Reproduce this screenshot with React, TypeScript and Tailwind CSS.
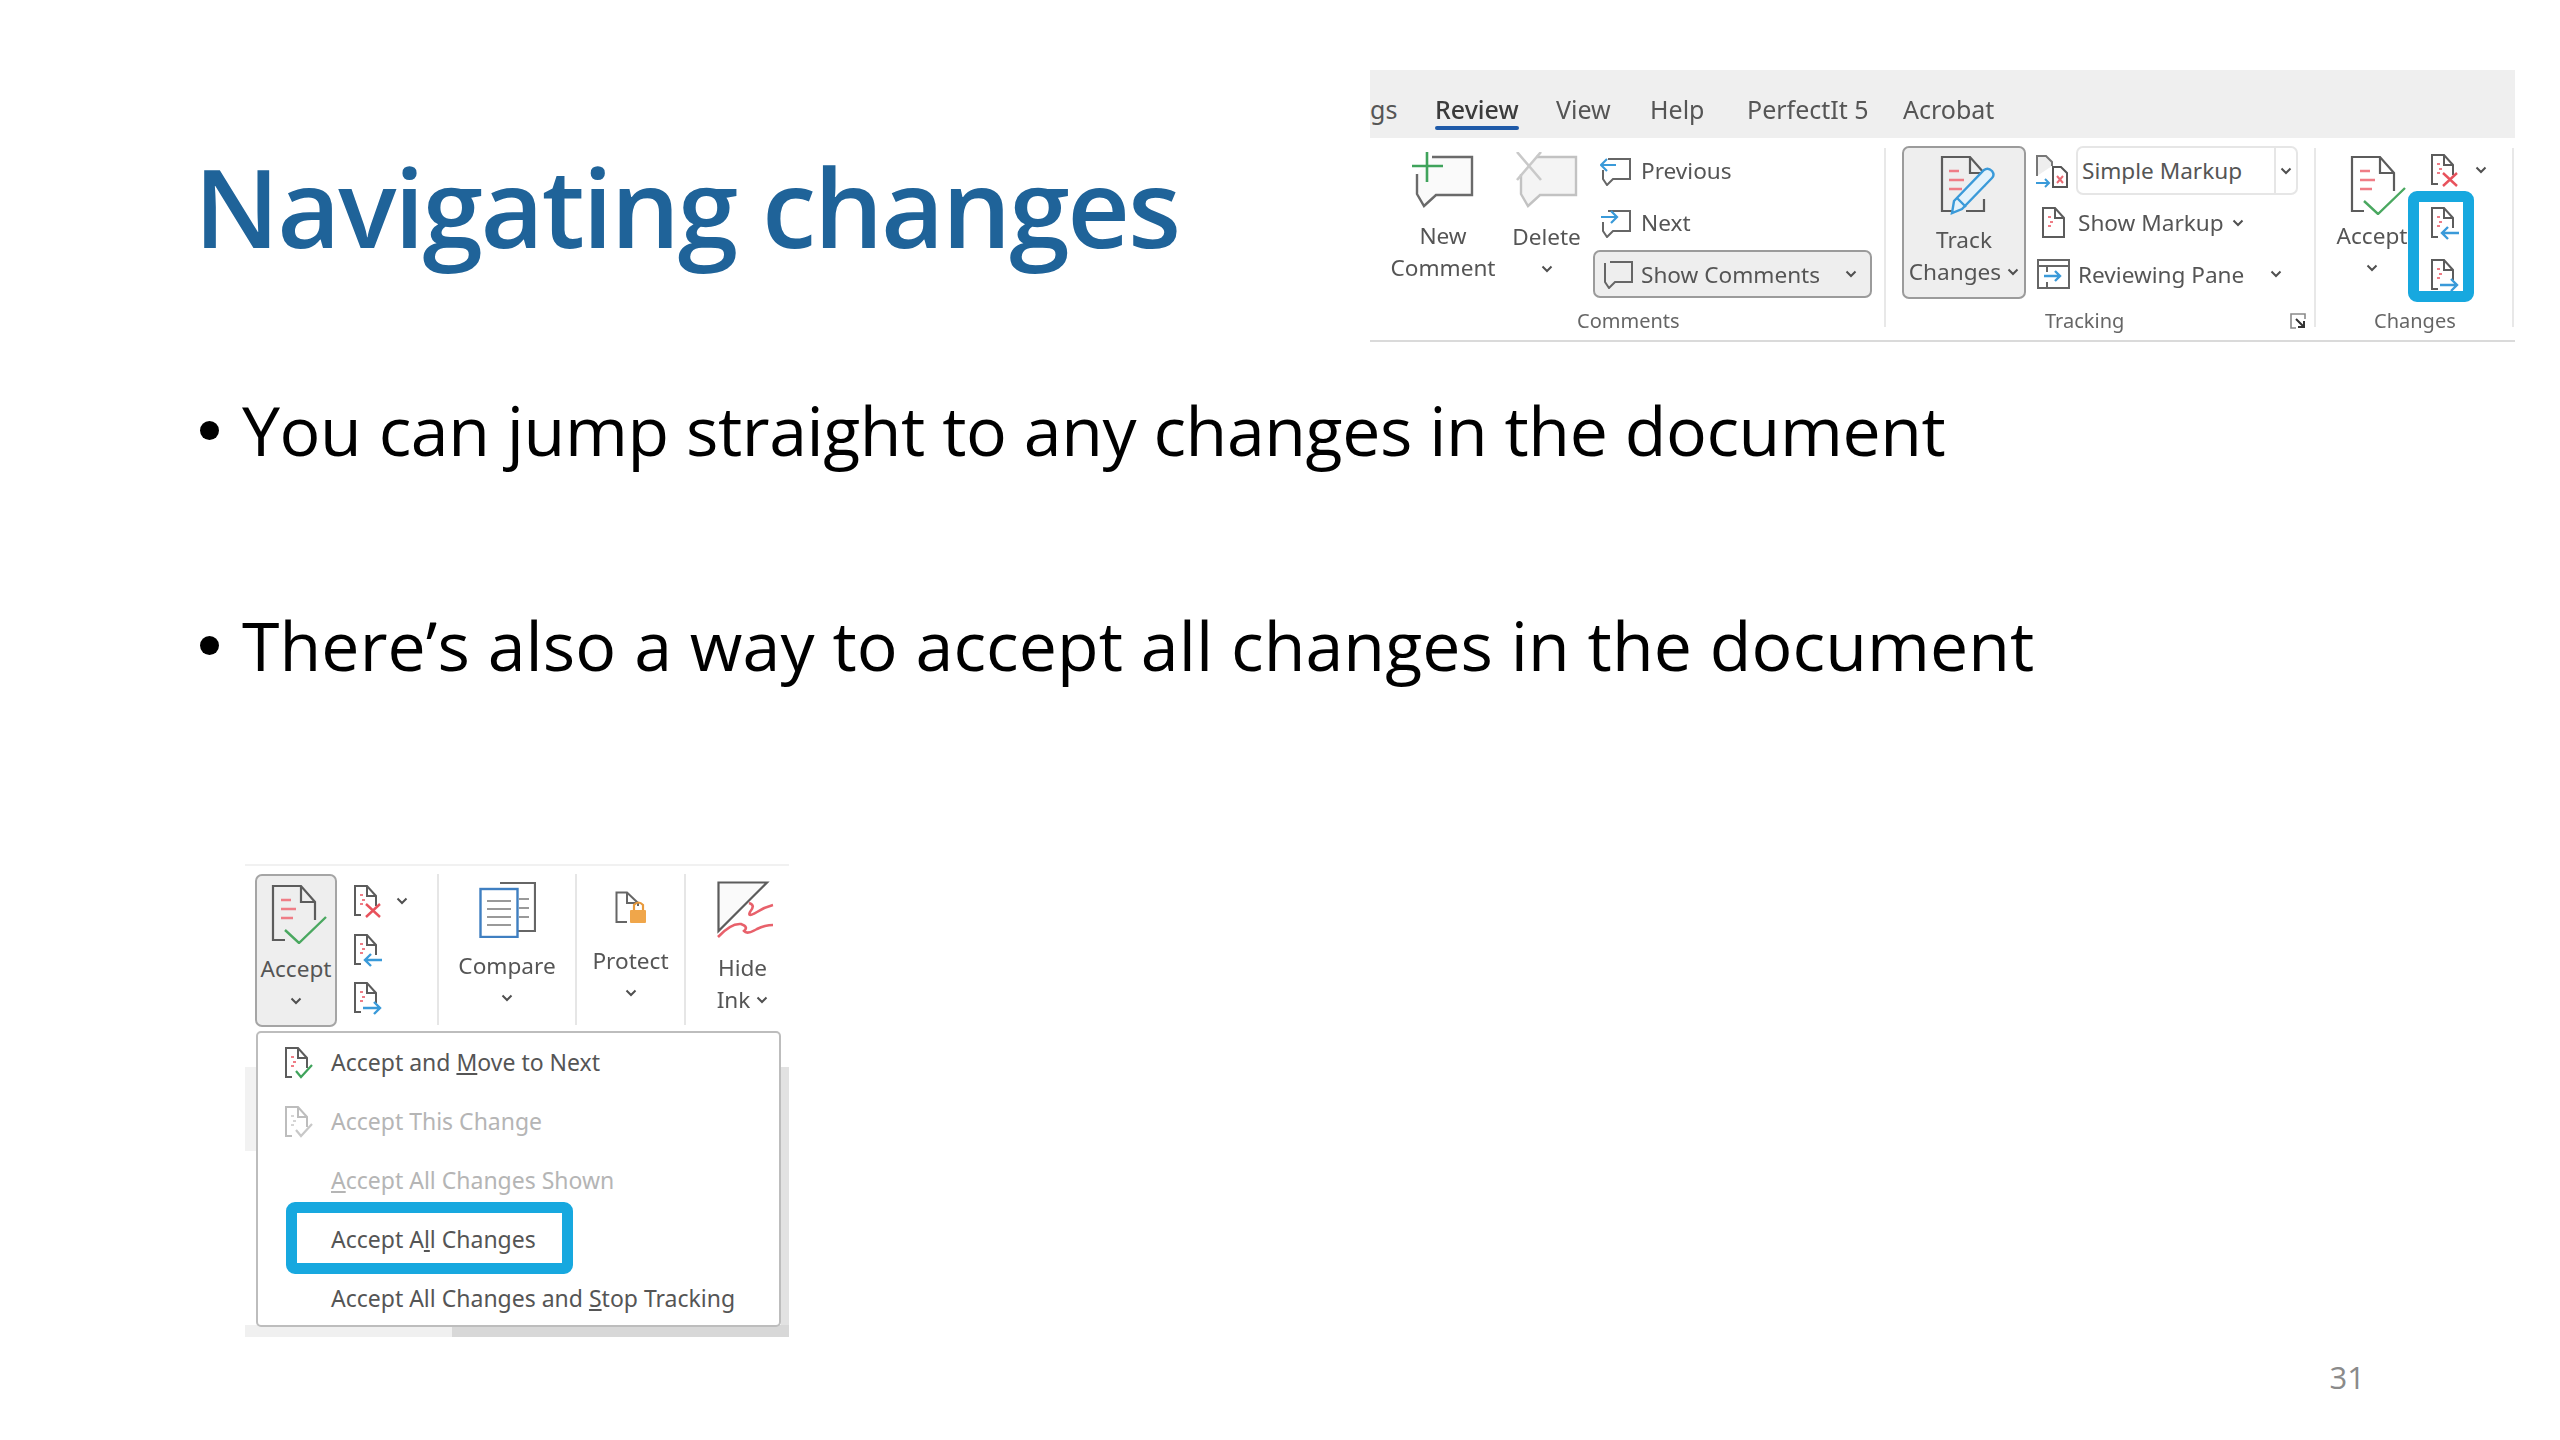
const ink = "#555555"

function Chevron({ className = "" }: { className?: string }) {
  return (
    <svg width="12" height="8" viewBox="0 0 12 8" className={className}>
      <polyline points="1.5,1.5 6,6 10.5,1.5" fill="none" stroke="#505050" strokeWidth="2" />
    </svg>
  )
}

function Bubble({ light = false, x = 0 }: { light?: boolean; x?: number }) {
  const c = light ? "#c2c2c2" : "#6a6a6a"
  return <path d={`M${x + 5} 22 V42 L${x + 12} 54 L${x + 24} 43 H${x + 60} V5 H${x + 20}`} fill={light ? "#f4f4f4" : "#fafafa"} stroke={c} strokeWidth="2.4" />
}

function NewCommentIcon() {
  return (
    <svg width="62" height="56" viewBox="0 0 62 56">
      <Bubble />
      <path d="M0 14 H31 M15 0 V30" stroke="#3fa35b" strokeWidth="2.6" />
    </svg>
  )
}

function DeleteCommentIcon() {
  return (
    <svg width="62" height="56" viewBox="0 0 62 56">
      <Bubble light />
      <path d="M1 0 L25 28 M25 0 L1 28" stroke="#c9c9c9" strokeWidth="2.6" />
    </svg>
  )
}

function SmallBubble({ arrow }: { arrow?: "left" | "right" }) {
  return (
    <svg width="31" height="30" viewBox="0 0 31 30">
      <path d="M3 14 V23 L7 29 L13 23 H30 V3 H8" fill="none" stroke="#666" strokeWidth="2" />
      {!arrow && <path d="M3 4 V23" stroke="#666" strokeWidth="2" />}
      {arrow === "left" && <path d="M16 9 H2 M7 3 L1 9 L7 15" fill="none" stroke="#3a9ad9" strokeWidth="2.2" />}
      {arrow === "right" && <path d="M1 9 H16 M11 3 L17 9 L11 15" fill="none" stroke="#3a9ad9" strokeWidth="2.2" />}
    </svg>
  )
}

function SmallDoc({ mark, light = false }: { mark?: "x" | "left" | "right" | "check"; light?: boolean }) {
  const line = light ? "#bdbdbd" : "#5c5c5c"
  return (
    <svg width="30" height="34" viewBox="0 0 30 34">
      <path d={mark ? "M8 31 H2 V2 H14 L23 12 V22 M14 2 V12 H23" : "M23 22 V31 H2 V2 H14 L23 12 V22 M14 2 V12 H23"} fill="none" stroke={line} strokeWidth="2" />
      <path d="M7 11 H10 M9 16 H12 M7 20 H10" stroke={light ? "#d5d5d5" : "#ef7d86"} strokeWidth="2" />
      {mark === "x" && <path d="M13 20 L27 33 M27 20 L13 33" stroke="#e8525c" strokeWidth="2.4" />}
      {mark === "left" && <path d="M29 27 H12 M18 21 L12 27 L18 33" fill="none" stroke="#3a9ad9" strokeWidth="2.4" />}
      {mark === "right" && <path d="M10 27 H27 M21 21 L27 27 L21 33" fill="none" stroke="#3a9ad9" strokeWidth="2.4" />}
      {mark === "check" && <path d="M12 25 L17 31 L28 19" fill="none" stroke={light ? "#c8c8c8" : "#3fa35b"} strokeWidth="2.2" />}
    </svg>
  )
}

function TrackIcon() {
  return (
    <svg width="56" height="60" viewBox="0 0 56 60">
      <path d="M12 56 H2 V2 H30 L44 18 V32 M30 2 V18 H44 M44 44 V56 H26" fill="none" stroke="#5c5c5c" strokeWidth="2.2" />
      <path d="M9 16 H19 M9 25 H24 M9 34 H22" stroke="#ef7d86" strokeWidth="2.6" />
      <path d="M12 58 L14 46 L44 15 Q48 12 52 16 Q55 20 52 23 L22 54 Z M17 43 L26 52" fill="#e4f2fb" stroke="#3a9ad9" strokeWidth="2.4" />
    </svg>
  )
}

function AcceptIcon() {
  return (
    <svg width="56" height="60" viewBox="0 0 56 60">
      <path d="M14 56 H2 V2 H30 L44 18 V36 M30 2 V18 H44" fill="none" stroke="#5c5c5c" strokeWidth="2.2" />
      <path d="M10 16 H20 M10 25 H25 M10 34 H22" stroke="#ef7d86" strokeWidth="2.6" />
      <path d="M14 46 L28 59 L55 33" fill="none" stroke="#4aa860" strokeWidth="2.4" />
    </svg>
  )
}

function SimpleMarkupIcon() {
  return (
    <svg width="33" height="34" viewBox="0 0 33 34">
      <path d="M2 22 V2 H11 L17 8 V12" fill="#eee" stroke="#777" strokeWidth="2" />
      <path d="M18 33 V13 H26 L32 19 V33 Z" fill="#fff" stroke="#555" strokeWidth="2" />
      <path d="M22 22 L28 29 M28 22 L22 29" stroke="#ea6a73" strokeWidth="2" />
      <path d="M1 29 H14 M10 25 L14 29 L10 33" fill="none" stroke="#3a9ad9" strokeWidth="2" />
    </svg>
  )
}

function PaneIcon() {
  return (
    <svg width="33" height="30" viewBox="0 0 33 30">
      <rect x="1" y="1" width="31" height="28" fill="#fff" stroke="#666" strokeWidth="2" />
      <path d="M1 7 H32 M10 7 V13 M10 23 V29" stroke="#666" strokeWidth="2" />
      <path d="M7 17 H23 M18 12 L23 17 L18 22" fill="none" stroke="#3a9ad9" strokeWidth="2.4" />
    </svg>
  )
}

function LauncherIcon() {
  return (
    <svg width="16" height="16" viewBox="0 0 16 16" className="ml-auto mr-[8px]">
      <path d="M6 15 H1 V1 H15 V6" fill="none" stroke="#8a8a8a" strokeWidth="1.6" />
      <path d="M6 6 L14 14 M14 8 V14 H8" fill="none" stroke="#333" strokeWidth="2" />
    </svg>
  )
}

function CompareIcon() {
  return (
    <svg width="57" height="57" viewBox="0 0 57 57">
      <path d="M21 2 H56 V50 H38" fill="#fff" stroke="#666" strokeWidth="2.2" />
      <path d="M40 18 H50 M40 27 H50 M40 36 H50" stroke="#999" strokeWidth="2.2" />
      <rect x="1.5" y="8" width="37" height="48" fill="#fff" stroke="#3f7fc1" strokeWidth="2.4" />
      <path d="M8 20 H32 M8 28 H32 M8 36 H32 M8 44 H32" stroke="#999" strokeWidth="2.2" />
    </svg>
  )
}

function ProtectIcon() {
  return (
    <svg width="31" height="33" viewBox="0 0 31 33">
      <path d="M12 31 H1.5 V1.5 H12 L23 12 V15 M12 1.5 V12 H23" fill="none" stroke="#666" strokeWidth="2" />
      <path d="M19 19 V14 Q23.5 9 28 14 V19" fill="none" stroke="#e89a3c" strokeWidth="2.2" />
      <rect x="15" y="19" width="16" height="13" rx="1" fill="#f0a64a" />
    </svg>
  )
}

function HideInkIcon() {
  return (
    <svg width="57" height="57" viewBox="0 0 57 57">
      <path d="M1.5 50 V1.5 H50 Z" fill="#fafafa" stroke="#5c5c5c" strokeWidth="2.2" />
      <path d="M32 22 Q39 24 33 31 Q30 37 40 31 Q48 26 56 24" fill="none" stroke="#e8616b" strokeWidth="2.6" />
      <path d="M1 56 Q14 42 24 43 Q32 46 27 50 Q30 54 40 48 Q48 44 56 44" fill="none" stroke="#e8616b" strokeWidth="2.6" />
    </svg>
  )
}

function Lines({ lines }: { lines: React.ReactNode[] }) {
  return (
    <>
      {lines.map((l, i) => (
        <div key={i} className="h-[32px] flex items-center justify-center gap-[6px] whitespace-nowrap">{l}</div>
      ))}
    </>
  )
}

function SmallRow({ icon, text, className = "" }: { icon: React.ReactNode; text: string; className?: string }) {
  return (
    <div className={`h-[49px] flex items-center ${className}`}>
      {icon}
      <span className="whitespace-nowrap">{text}</span>
    </div>
  )
}

function GroupLabel({ children, className = "" }: { children: React.ReactNode; className?: string }) {
  return <div className={`text-[20px] leading-[28px] text-[#666] whitespace-nowrap ${className}`}>{children}</div>
}

function Separator() {
  return <div className="w-[2px] h-[179px] mt-[10px] bg-[#e8e8e8]"></div>
}

function Ribbon() {
  return (
    <div className="w-[1145px] h-[272px] flex flex-col text-[22.6px] blur-[0.5px]" style={{ color: ink }}>
      <div className="h-[68px] bg-[#efefef] flex items-center text-[25px] leading-[34px] pt-[10px]">
        <span className="w-[65px] overflow-hidden">gs</span>
        <span className="relative w-[121px] text-[#3b3b3b] font-medium">
          Review
          <span className="absolute left-0 bottom-[-4px] w-[84px] h-[4px] rounded-sm bg-[#1f5aa8]"></span>
        </span>
        <span className="w-[94px]">View</span>
        <span className="w-[97px]">Help</span>
        <span className="w-[156px]">PerfectIt 5</span>
        <span>Acrobat</span>
      </div>
      <div className="h-[204px] flex border-b-2 border-[#dadada]">
        {/* comments */}
        <div className="w-[514px] pt-[8px] flex flex-col">
          <div className="h-[153px] flex">
            <div className="w-[106px] ml-[20px] flex flex-col items-center">
              <div className="mt-[6px] mb-[12px]"><NewCommentIcon /></div>
              <Lines lines={["New", "Comment"]} />
            </div>
            <div className="w-[67px] ml-[17px] flex flex-col items-center">
              <div className="mt-[6px] mb-[13px]"><DeleteCommentIcon /></div>
              <Lines lines={["Delete", <Chevron />]} />
            </div>
            <div className="w-[279px] ml-[13px] flex flex-col gap-[3px]">
              <SmallRow className="pl-[7px]" icon={<div className="w-[41px]"><SmallBubble arrow="left" /></div>} text="Previous" />
              <SmallRow className="pl-[7px]" icon={<div className="w-[41px]"><SmallBubble arrow="right" /></div>} text="Next" />
              <div className="h-[48px] flex items-center pl-[7px] pr-[13px] bg-[#eeeeee] border-2 border-[#9b9b9b] rounded-[7px]">
                <div className="w-[39px]"><SmallBubble /></div>
                <span className="whitespace-nowrap pt-[2px]">Show Comments</span>
                <Chevron className="ml-auto" />
              </div>
            </div>
          </div>
          <GroupLabel className="mt-[8px] ml-[207px]">Comments</GroupLabel>
        </div>
        <Separator />
        {/* tracking */}
        <div className="w-[428px] pt-[8px] flex flex-col">
          <div className="h-[153px] flex">
            <div className="w-[124px] ml-[16px] bg-[#eeeeee] border-2 border-[#9b9b9b] rounded-[7px] flex flex-col items-center">
              <div className="mt-[7px] mb-[9px] ml-[8px]"><TrackIcon /></div>
              <Lines lines={["Track", <>Changes <Chevron /></>]} />
            </div>
            <div className="w-[263px] ml-[9px] flex flex-col gap-[3px]">
              <div className="h-[49px] flex items-center">
                <div className="w-[41px]"><SimpleMarkupIcon /></div>
                <div className="w-[222px] h-[49px] flex items-center bg-white border-2 border-[#e6e6e6] rounded-[7px] pl-[4px]">
                  <span className="flex-1 whitespace-nowrap">Simple Markup</span>
                  <div className="w-[22px] h-full border-l-2 border-[#e6e6e6] flex items-center justify-center"><Chevron /></div>
                </div>
              </div>
              <div className="h-[49px] flex items-center pl-[6px]">
                <div className="w-[37px]"><SmallDoc /></div>
                <span className="whitespace-nowrap">Show Markup</span>
                <Chevron className="ml-[8px]" />
              </div>
              <div className="h-[48px] flex items-center pl-[2px]">
                <div className="w-[41px]"><PaneIcon /></div>
                <span className="whitespace-nowrap pt-[2px]">Reviewing Pane</span>
                <Chevron className="ml-[26px]" />
              </div>
            </div>
          </div>
          <div className="mt-[8px] flex items-center">
            <GroupLabel className="ml-[159px]">Tracking</GroupLabel>
            <LauncherIcon />
          </div>
        </div>
        <Separator />
        {/* changes */}
        <div className="w-[196px] pt-[8px] flex flex-col">
          <div className="h-[153px] flex">
            <div className="w-[70px] ml-[21px] flex flex-col items-center">
              <div className="mt-[9px] mb-[5px] ml-[12px]"><AcceptIcon /></div>
              <Lines lines={["Accept", <Chevron />]} />
            </div>
            <div className="relative ml-[23px] flex flex-col">
              <div className="h-[52px] pt-[7px] flex items-start">
                <SmallDoc mark="x" />
                <Chevron className="ml-[15px] mt-[13px]" />
              </div>
              <div className="h-[52px] pt-[8px]"><SmallDoc mark="left" /></div>
              <div className="h-[49px] pt-[8px]"><SmallDoc mark="right" /></div>
              <div className="absolute left-[-22px] top-[45px] w-[66px] h-[111px] border-[11px] border-[#17a8df] rounded-[9px]"></div>
            </div>
          </div>
          <GroupLabel className="mt-[8px] ml-[58px]">Changes</GroupLabel>
        </div>
        <Separator />
      </div>
    </div>
  )
}

function MenuItem({ icon, children, muted = false }: { icon?: React.ReactNode; children: React.ReactNode; muted?: boolean }) {
  return (
    <div className={`h-[59px] flex items-center whitespace-nowrap ${muted ? "text-[#b5b5b5]" : ""}`}>
      <div className="w-[47px]">{icon}</div>
      {children}
    </div>
  )
}

function AcceptMenuShot() {
  return (
    <div className="relative w-[544px] h-[473px] text-[22.6px] blur-[0.5px]" style={{ color: ink }}>
      <div className="h-[162px] border-t-2 border-[#f1f1f1] pt-[8px] flex">
        <div className="w-[82px] h-[153px] ml-[10px] bg-[#eeeeee] border-2 border-[#a5a5a5] rounded-[7px] flex flex-col items-center">
          <div className="mt-[8px] mb-[9px] ml-[6px]"><AcceptIcon /></div>
          <Lines lines={["Accept", <Chevron />]} />
        </div>
        <div className="w-[100px] pl-[16px] pt-[10px] flex flex-col">
          <div className="h-[53px] flex items-start">
            <SmallDoc mark="x" />
            <Chevron className="ml-[13px] mt-[13px]" />
          </div>
          <div className="h-[52px]"><SmallDoc mark="left" /></div>
          <div className="h-[48px]"><SmallDoc mark="right" /></div>
        </div>
        <div className="w-[140px] h-[151px] border-x-2 border-[#e6e6e6] flex flex-col items-center">
          <div className="mt-[7px] mb-[12px]"><CompareIcon /></div>
          <Lines lines={["Compare", <Chevron />]} />
        </div>
        <div className="w-[109px] h-[151px] border-r-2 border-[#e6e6e6] flex flex-col items-center">
          <div className="mt-[17px] mb-[21px]"><ProtectIcon /></div>
          <Lines lines={["Protect", <Chevron />]} />
        </div>
        <div className="flex-1 flex flex-col items-center pl-[10px]">
          <div className="mt-[7px] mb-[14px] ml-[6px]"><HideInkIcon /></div>
          <Lines lines={["Hide", <>Ink <Chevron /></>]} />
        </div>
      </div>
      {/* the page behind the open menu */}
      <div className="absolute left-0 top-[203px] w-[542px] h-[84px] bg-[#f2f2f2]"></div>
      <div className="absolute right-0 top-[203px] w-[8px] h-[270px] bg-[#e2e2e2]"></div>
      <div className="absolute left-[207px] right-0 bottom-0 h-[12px] bg-[#d8d8d8]"></div>
      <div className="absolute left-0 bottom-0 w-[207px] h-[12px] bg-[#f0f0f0]"></div>
      <div className="absolute left-[11px] top-[167px] w-[525px] h-[296px] bg-white border-2 border-[#bdbdbd] rounded-[5px] pl-[26px] text-[23px]">
        <MenuItem icon={<SmallDoc mark="check" />}>Accept and&nbsp;<u>M</u>ove to Next</MenuItem>
        <MenuItem muted icon={<SmallDoc mark="check" light />}>Accept This Change</MenuItem>
        <MenuItem muted><u>A</u>ccept All Changes Shown</MenuItem>
        <MenuItem>Accept A<u>l</u>l Changes</MenuItem>
        <MenuItem>Accept All Changes and&nbsp;<u>S</u>top Tracking</MenuItem>
        <div className="absolute left-[28px] top-[169px] w-[287px] h-[72px] border-[11px] border-[#17a8df] rounded-[9px]"></div>
      </div>
    </div>
  )
}

function Bullet({ text, tracking }: { text: string; tracking: string }) {
  return (
    <li className="flex items-center">
      <span className="w-[19px] h-[19px] ml-[3px] mr-[23px] rounded-full bg-black"></span>
      <span className={tracking}>{text}</span>
    </li>
  )
}

export default function App() {
  return (
    <div className="w-[2560px] h-[1440px] bg-white overflow-hidden flex flex-col font-['Open_Sans',sans-serif]">
      <div className="flex pl-[194px] pr-[45px] pt-[70px]">
        <h1 className="flex-1 pt-[76px] text-[109px] leading-[120px] font-semibold text-[#1f6399] whitespace-nowrap tracking-[-2.2px]">Navigating changes</h1>
        <div className="font-['Noto_Sans',sans-serif]"><Ribbon /></div>
      </div>
      <ul className="pl-[197px] mt-[48px] flex flex-col gap-[135px] text-[68px] leading-[80px] text-black">
        <Bullet tracking="tracking-[-0.4px]" text="You can jump straight to any changes in the document" />
        <Bullet tracking="tracking-[0.1px]" text="There’s also a way to accept all changes in the document" />
      </ul>
      <div className="pl-[245px] mt-[179px] font-['Noto_Sans',sans-serif]"><AcceptMenuShot /></div>
      <div className="mt-[20px] pr-[195px] text-right text-[31px] leading-[40px] text-[#8a8a8a]">31</div>
    </div>
  )
}
